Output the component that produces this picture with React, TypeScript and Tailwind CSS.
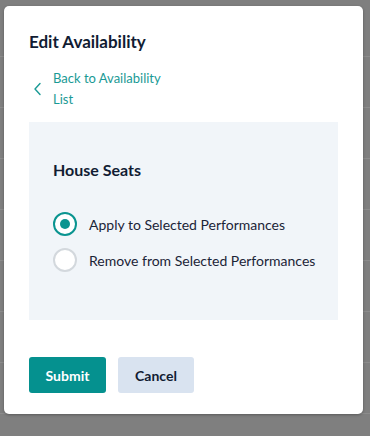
import { useState } from "react";

function Radio({ checked, label, onClick }: { checked: boolean; label: string; onClick: () => void }) {
  return (
    <button type="button" onClick={onClick} className="flex items-center gap-3 text-left">
      <span
        className={
          checked
            ? "flex h-6 w-6 shrink-0 items-center justify-center rounded-full border-[2.5px] border-[#0a9490] bg-white"
            : "flex h-6 w-6 shrink-0 items-center justify-center rounded-full border-2 border-[#d3d8dd] bg-white"
        }
      >
        {checked && <span className="h-[10px] w-[10px] rounded-full bg-[#0a9490]" />}
      </span>
      <span className="whitespace-nowrap text-[14px] text-[#1b2437]">{label}</span>
    </button>
  );
}

export default function App() {
  const [choice, setChoice] = useState("apply");

  return (
    <div className="relative h-[436px] w-[370px] overflow-hidden bg-[#7f7f7f] font-['Lato','Liberation_Sans',sans-serif]">
      {/* table rows behind the overlay */}
      <div className="pt-[6px]">
        {Array.from({ length: 8 }).map((_, i) => (
          <div key={i} className="h-[51px] border-b border-[#8c8c8c]" />
        ))}
      </div>

      <div className="absolute left-[4px] top-[6px] flex h-[408px] w-[359px] flex-col rounded-[5px] bg-white px-[25px] pt-[26px] shadow-[0_1px_3px_rgba(0,0,0,0.3)]">
        <h2 className="text-[17px] font-bold leading-5 text-[#111c33]">Edit Availability</h2>

        <a href="#" className="mt-[16px] flex items-center text-[13px] leading-[21px] text-[#1a9a95]">
          <svg width="24" height="24" viewBox="0 0 24 24" className="-ml-[3px] mr-[3px] shrink-0">
            <path d="M14 6.5 9 12l5 5.5" fill="none" stroke="#1a9a95" strokeWidth="1.4" strokeLinecap="round" strokeLinejoin="round" />
          </svg>
          <span className="w-[118px]">Back to Availability List</span>
        </a>

        <div className="mt-[12px] flex h-[198px] flex-col bg-[#f1f5f9] px-[24px] pt-[38px]">
          <h3 className="text-[16px] font-bold leading-5 text-[#111c33]">House Seats</h3>
          <div className="mt-[32px] flex flex-col gap-[12px]">
            <Radio checked={choice === "apply"} label="Apply to Selected Performances" onClick={() => setChoice("apply")} />
            <Radio checked={choice === "remove"} label="Remove from Selected Performances" onClick={() => setChoice("remove")} />
          </div>
        </div>

        <div className="mt-[37px] flex gap-[12px]">
          <button type="button" className="h-[36px] w-[77px] rounded-[3px] bg-[#05918f] text-[14px] font-bold text-white">
            Submit
          </button>
          <button type="button" className="h-[36px] w-[76px] rounded-[3px] bg-[#d9e3f0] text-[14px] font-bold text-[#111c33]">
            Cancel
          </button>
        </div>
      </div>
    </div>
  );
}
